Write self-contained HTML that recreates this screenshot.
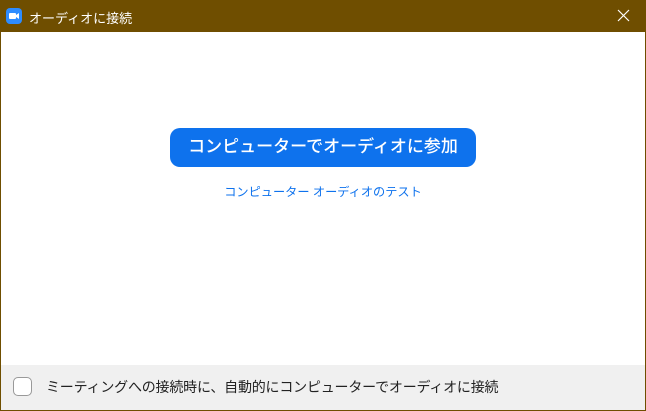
<!DOCTYPE html>
<html><head><meta charset="utf-8"><style>
*{margin:0;padding:0;box-sizing:border-box}
body{width:646px;height:411px;overflow:hidden;background:#6f4e00;font-family:"Liberation Sans","Noto Sans CJK JP",sans-serif;position:relative}
.title{position:absolute;left:0;top:0;width:646px;height:32px;color:#fff;font-size:13px}
.title .t{position:absolute;left:29px;top:8px}
.icon{position:absolute;left:6px;top:8px;width:16px;height:16px;background:#2d8cff;border-radius:4px}
.main{position:absolute;left:1px;top:32px;width:644px;height:333px;background:#fff}
.btn{position:absolute;left:169px;top:96px;width:306px;height:39px;background:#0e72ed;border-radius:10px;color:#fff;font-size:17px;font-weight:500;text-align:center;line-height:38px}
.link{position:absolute;left:0;width:644px;top:150px;text-align:center;color:#0e72ed;font-size:12.2px}
.foot{position:absolute;left:1px;top:365px;width:644px;height:45px;background:#f0f0f0}
.cb{position:absolute;left:12px;top:12px;width:19px;height:19px;border:1.5px solid #999;border-radius:5px;background:#fff}
.ft{position:absolute;left:45px;top:12px;font-size:14px;letter-spacing:-0.2px;color:#222}
</style></head><body>
<div class="title"><div class="icon"><svg width="16" height="16" viewBox="0 0 16 16"><rect x="3" y="5" width="7" height="6" rx="1" fill="#fff"/><path d="M10 7l3-2v6l-3-2z" fill="#fff"/></svg></div><span class="t">オーディオに接続</span>
<svg style="position:absolute;left:617px;top:9px" width="13" height="13" viewBox="0 0 13 13"><path d="M1 1L12 12M12 1L1 12" stroke="#fff" stroke-width="1.2"/></svg></div>
<div class="main"><div class="btn">コンピューターでオーディオに参加</div><div class="link">コンピューター オーディオのテスト</div></div>
<div class="foot"><div class="cb"></div><div class="ft">ミーティングへの接続時に、自動的にコンピューターでオーディオに接続</div></div>
</body></html>
